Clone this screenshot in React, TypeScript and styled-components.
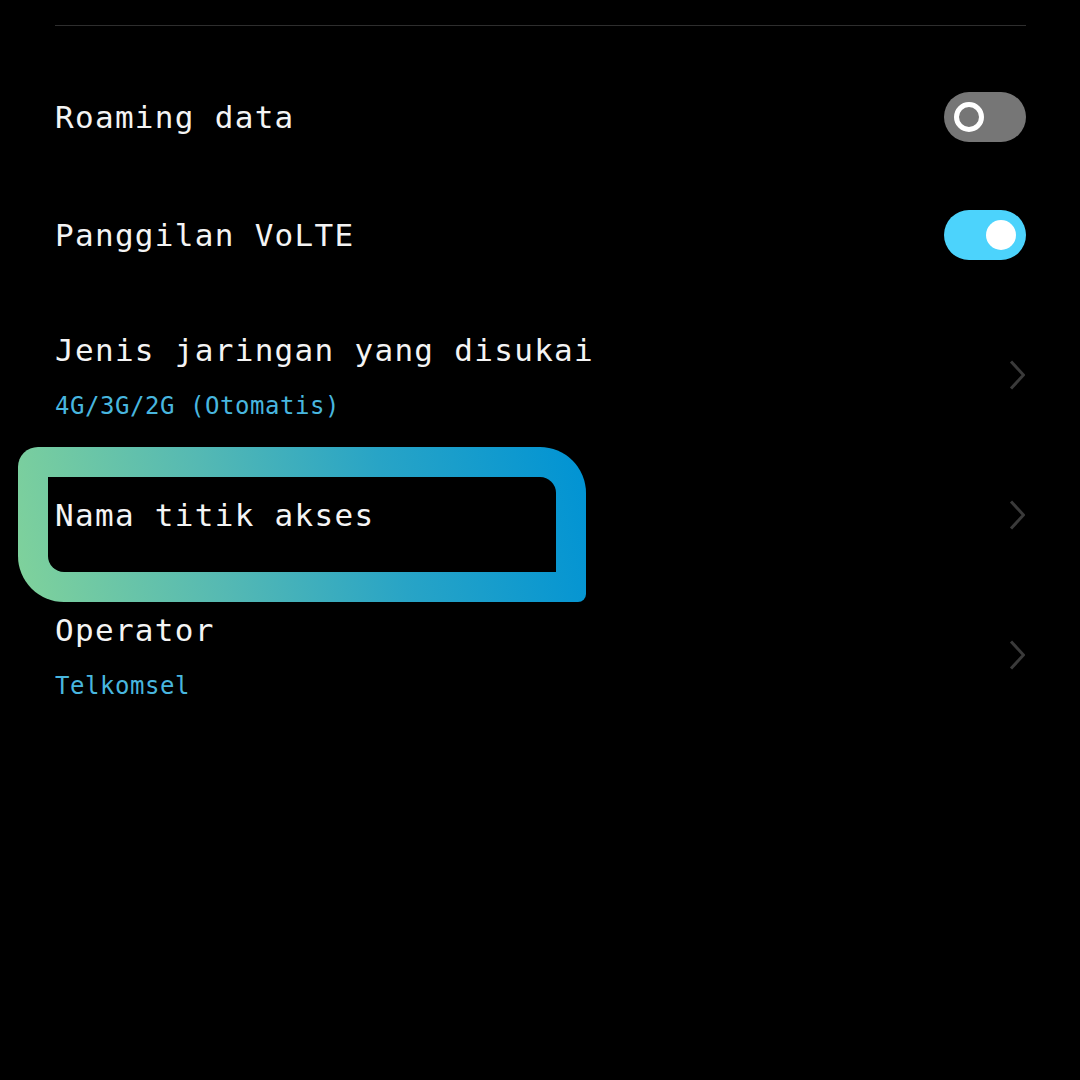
import React from "react";
import styled, { createGlobalStyle } from "styled-components";

const Global = createGlobalStyle`
  html, body { margin: 0; padding: 0; background: #000; }
  body { width: 1080px; height: 1080px; overflow: hidden; font-family: "DejaVu Sans Mono", "Liberation Mono", monospace; }
`;

const Screen = styled.div`
  width: 1080px;
  height: 1080px;
  background: #000;
  box-sizing: border-box;
  padding: 25px 54px 0 55px;
  display: flex;
  flex-direction: column;
`;

const Separator = styled.div`
  height: 1px;
  background: #2e2e2e;
  margin-bottom: 32px;
`;

const Row = styled.div<{ $tall?: boolean }>`
  position: relative;
  height: ${(p) => (p.$tall ? 162 : 118)}px;
  display: flex;
  align-items: center;
  justify-content: space-between;
`;

const TextBlock = styled.div`
  position: relative;
  z-index: 1;
  display: flex;
  flex-direction: column;
  gap: 21px;
`;

const Title = styled.div`
  color: #f4f4f4;
  font-size: 31px;
  line-height: 40px;
  letter-spacing: 1.3px;
  white-space: nowrap;
`;

const Subtitle = styled.div`
  color: #48b6df;
  font-size: 24px;
  line-height: 30px;
  letter-spacing: 0.55px;
  white-space: nowrap;
`;

const Toggle = styled.div<{ $on: boolean }>`
  width: 82px;
  height: 50px;
  border-radius: 25px;
  background: ${(p) => (p.$on ? "#4cd3fc" : "#767676")};
  display: flex;
  align-items: center;
  justify-content: ${(p) => (p.$on ? "flex-end" : "flex-start")};
  padding: 0 10px;
  box-sizing: border-box;
`;

const Knob = styled.div<{ $on: boolean }>`
  width: 30px;
  height: 30px;
  border-radius: 50%;
  box-sizing: border-box;
  background: ${(p) => (p.$on ? "#ffffff" : "#767676")};
  border: ${(p) => (p.$on ? "none" : "5px solid #ffffff")};
`;

const Highlight = styled.div`
  position: absolute;
  left: -37px;
  top: -9px;
  width: 568px;
  height: 155px;
  box-sizing: border-box;
  padding: 30px;
  border-radius: 20px 46px 8px 46px;
  background: linear-gradient(78deg, #80d29b 0%, #55b9b3 35%, #28a4c6 65%, #0093d4 100%);
  z-index: 0;
`;

const HighlightInner = styled.div`
  width: 100%;
  height: 100%;
  background: #000;
  border-radius: 0 16px 0 16px;
`;

const Chevron = () => (
  <svg width="16" height="30" viewBox="0 0 16 30" style={{ marginRight: 1 }}>
    <polyline points="2,1.5 14.5,15 2,28.5" fill="none" stroke="#3a3a3a" strokeWidth="3" />
  </svg>
);

export default function App() {
  return (
    <>
      <Global />
      <Screen>
        <Separator />
        <Row>
          <TextBlock>
            <Title>Roaming data</Title>
          </TextBlock>
          <Toggle $on={false}>
            <Knob $on={false} />
          </Toggle>
        </Row>
        <Row>
          <TextBlock>
            <Title>Panggilan VoLTE</Title>
          </TextBlock>
          <Toggle $on={true}>
            <Knob $on={true} />
          </Toggle>
        </Row>
        <Row $tall>
          <TextBlock>
            <Title>Jenis jaringan yang disukai</Title>
            <Subtitle>4G/3G/2G (Otomatis)</Subtitle>
          </TextBlock>
          <Chevron />
        </Row>
        <Row>
          <Highlight>
            <HighlightInner />
          </Highlight>
          <TextBlock>
            <Title>Nama titik akses</Title>
          </TextBlock>
          <Chevron />
        </Row>
        <Row $tall>
          <TextBlock>
            <Title>Operator</Title>
            <Subtitle>Telkomsel</Subtitle>
          </TextBlock>
          <Chevron />
        </Row>
      </Screen>
    </>
  );
}
